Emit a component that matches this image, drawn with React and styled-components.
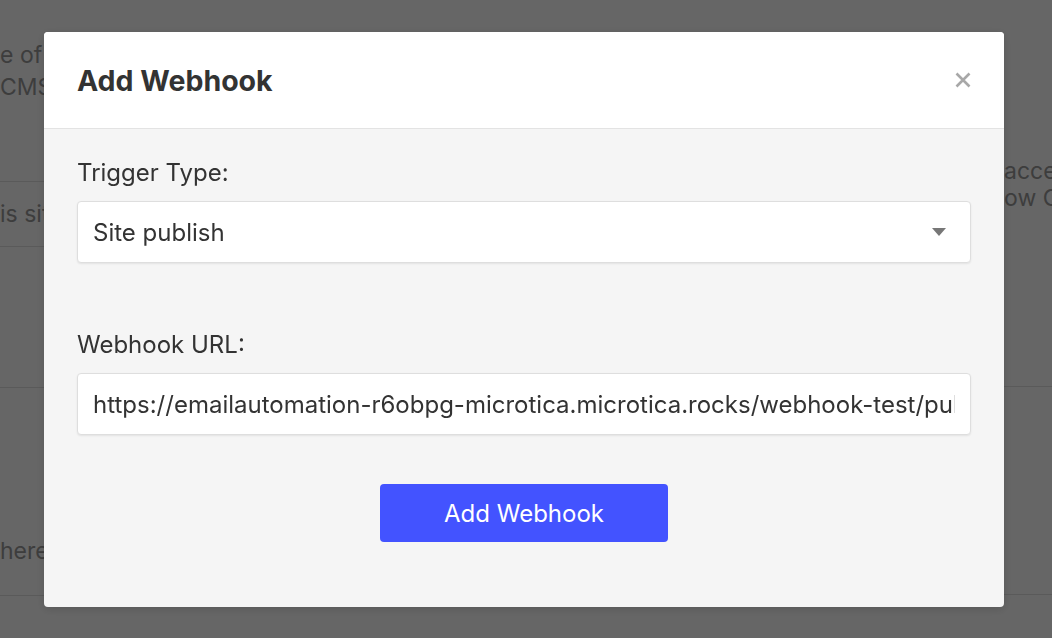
import React from 'react';
import styled, { createGlobalStyle } from 'styled-components';

const GlobalStyle = createGlobalStyle`
  html, body {
    margin: 0;
    padding: 0;
    height: 100%;
    overflow: hidden;
  }
  body {
    font-family: Inter, "Noto Sans", "Liberation Sans", sans-serif;
    background: #ffffff;
    color: #333333;
  }
`;

/* page behind the dialog */
const Page = styled.div`
  display: flex;
  justify-content: space-between;
  width: 1052px;
  height: 638px;
  overflow: hidden;
  background: #ffffff;
`;

const Column = styled.div`
  display: flex;
  flex-direction: column;
  width: ${p => p.$w}px;
  overflow: hidden;
  padding-top: ${p => p.$top}px;
`;

const Para = styled.p`
  margin: ${p => p.$mt || 0}px 0 0;
  font-size: 23px;
  line-height: ${p => p.$lh || 32}px;
  color: #9a9a9a;
  white-space: nowrap;
`;

const Divider = styled.div`
  flex-shrink: 0;
  height: 1px;
  background: #e2e2e2;
  margin-top: ${p => p.$gap || 0}px;
`;

const Overlay = styled.div`
  position: fixed;
  inset: 0;
  background: rgba(0, 0, 0, 0.6);
  display: flex;
  align-items: flex-start;
  padding: 32px 0 0 44px;
`;

const Modal = styled.div`
  width: 960px;
  background: #f5f5f5;
  border-radius: 4px;
  overflow: hidden;
  box-shadow: 0 2px 10px rgba(0, 0, 0, 0.15);
`;

const Header = styled.div`
  display: flex;
  align-items: center;
  justify-content: space-between;
  height: 96px;
  padding: 0 28px 0 33px;
  background: #ffffff;
  border-bottom: 1px solid #e3e3e3;
`;

const Title = styled.h2`
  margin: 0;
  font-size: 28.5px;
  font-weight: 700;
  color: #333333;
`;

const Close = styled.button`
  display: flex;
  align-items: center;
  justify-content: center;
  width: 26px;
  height: 26px;
  border: 0;
  padding: 0;
  background: transparent;
  cursor: pointer;
`;

const Body = styled.div`
  display: flex;
  flex-direction: column;
  padding: 30px 33px 65px;
`;

const Field = styled.div`
  display: flex;
  flex-direction: column;
  gap: 14px;
  margin-bottom: ${p => p.$mb || 0}px;
`;

const Label = styled.label`
  font-size: 24px;
  line-height: 28px;
  color: #333333;
`;

const Box = styled.div`
  display: flex;
  align-items: center;
  justify-content: space-between;
  gap: 12px;
  height: 62px;
  box-sizing: border-box;
  padding: 0 ${p => p.$pr || 24}px 0 15px;
  background: #ffffff;
  border: 1px solid #dedede;
  border-radius: 4px;
  box-shadow: 0 1px 2px rgba(0, 0, 0, 0.08);
  font-size: 24px;
  color: #333333;
  overflow: hidden;
  white-space: nowrap;
`;

const BoxText = styled.span`
  overflow: hidden;
  white-space: nowrap;
`;

const Caret = styled.span`
  flex-shrink: 0;
  width: 0;
  height: 0;
  border-left: 7px solid transparent;
  border-right: 7px solid transparent;
  border-top: 8px solid #777777;
`;

const Actions = styled.div`
  display: flex;
  justify-content: center;
`;

const Button = styled.button`
  width: 288px;
  height: 58px;
  border: 0;
  border-radius: 4px;
  background: #4353ff;
  color: #ffffff;
  font-family: inherit;
  font-size: 24px;
  cursor: pointer;
`;

export default function App() {
  return (
    <>
      <GlobalStyle />
      <Page>
        <Column $w={44} $top={39}>
          <Para>e of the</Para>
          <Para>CMS items</Para>
          <Divider $gap={78} />
          <Para $lh={64}>is site</Para>
          <Divider />
          <Divider $gap={140} />
          <Para $mt={147}>here</Para>
          <Divider $gap={28} />
        </Column>
        <Column $w={48} $top={158}>
          <Para $lh={27}>access</Para>
          <Para $lh={27}>ow CMS</Para>
          <Divider $gap={174} />
          <Divider $gap={207} />
        </Column>
      </Page>
      <Overlay>
        <Modal>
          <Header>
            <Title>Add Webhook</Title>
            <Close aria-label="Close">
              <svg width="18" height="18" viewBox="0 0 18 18">
                <path d="M2.5 2.5 L15.5 15.5 M15.5 2.5 L2.5 15.5" stroke="#a8a8a8" strokeWidth="2.6" />
              </svg>
            </Close>
          </Header>
          <Body>
            <Field $mb={68}>
              <Label>Trigger Type:</Label>
              <Box>
                <BoxText>Site publish</BoxText>
                <Caret />
              </Box>
            </Field>
            <Field $mb={49}>
              <Label>Webhook URL:</Label>
              <Box $pr={15}>
                <BoxText>https://emailautomation-r6obpg-microtica.microtica.rocks/webhook-test/publish</BoxText>
              </Box>
            </Field>
            <Actions>
              <Button>Add Webhook</Button>
            </Actions>
          </Body>
        </Modal>
      </Overlay>
    </>
  );
}
